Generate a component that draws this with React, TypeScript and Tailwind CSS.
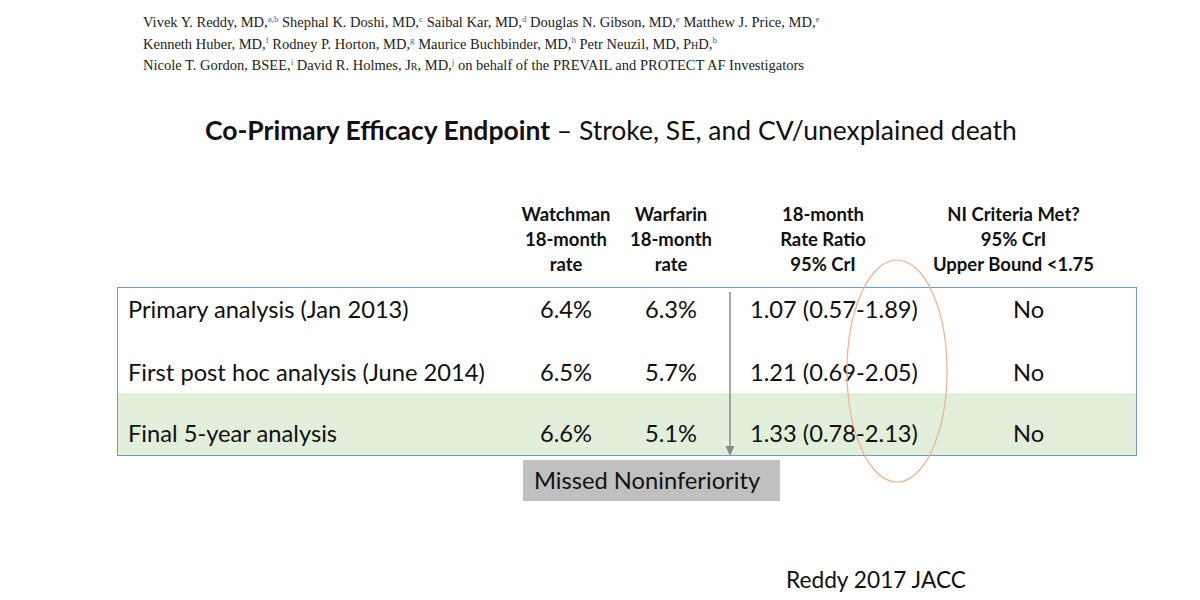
import React from 'react';

const sans = "font-['Lato','Liberation_Sans',sans-serif]";

const rows = [
  {
    label: 'Primary analysis (Jan 2013)',
    watchman: '6.4%',
    warfarin: '6.3%',
    ratio: '1.07 (0.57-1.89)',
    met: 'No',
    cls: 'h-[51px] pt-[6px] bg-white',
  },
  {
    label: 'First post hoc analysis (June 2014)',
    watchman: '6.5%',
    warfarin: '5.7%',
    ratio: '1.21 (0.69-2.05)',
    met: 'No',
    cls: 'h-[54px] pt-[18px] bg-white',
  },
  {
    label: 'Final 5-year analysis',
    watchman: '6.6%',
    warfarin: '5.1%',
    ratio: '1.33 (0.78-2.13)',
    met: 'No',
    cls: 'h-[62px] pt-[25px] bg-[#e2efda]',
  },
];

function Sup({ children }: { children: React.ReactNode }) {
  return <sup className="text-[9px] text-[#2a6ebb] top-[-0.6em]">{children}</sup>;
}

function Authors() {
  return (
    <div className="pl-[143px] pt-[12px] font-['Liberation_Serif',serif] text-[14.5px] leading-[21.5px] text-[#222]">
      <div>
        Vivek Y. Reddy, MD,<Sup>a,b</Sup> Shephal K. Doshi, MD,<Sup>c</Sup> Saibal Kar, MD,<Sup>d</Sup> Douglas N. Gibson, MD,
        <Sup>e</Sup> Matthew J. Price, MD,<Sup>e</Sup>
      </div>
      <div>
        Kenneth Huber, MD,<Sup>f</Sup> Rodney P. Horton, MD,<Sup>g</Sup> Maurice Buchbinder, MD,<Sup>h</Sup> Petr Neuzil, MD,{' '}
        <span className="[font-variant:small-caps]">PhD</span>,<Sup>b</Sup>
      </div>
      <div>
        Nicole T. Gordon, BSEE,<Sup>i</Sup> David R. Holmes, <span className="[font-variant:small-caps]">Jr</span>, MD,
        <Sup>j</Sup> on behalf of the PREVAIL and PROTECT AF Investigators
      </div>
    </div>
  );
}

const grid = 'grid grid-cols-[397px_102px_108px_196px_215px]';

export default function App() {
  return (
    <div className={`relative w-[1200px] h-[600px] bg-white overflow-hidden text-black ${sans}`}>
      <Authors />

      <div className="mt-[35px] pl-[205px] text-[26.5px] leading-[36px] text-[#111] whitespace-nowrap">
        <span className="font-bold">Co-Primary Efficacy Endpoint</span> – Stroke, SE, and CV/unexplained death
      </div>

      <div className={`${grid} ml-[118px] mt-[54px] text-[18.5px] leading-[25px] font-bold text-center text-[#111]`}>
        <div />
        <div>
          Watchman
          <br />
          18-month
          <br />
          rate
        </div>
        <div>
          Warfarin
          <br />
          18-month
          <br />
          rate
        </div>
        <div>
          18-month
          <br />
          Rate Ratio
          <br />
          95% CrI
        </div>
        <div className="pr-[30px]">
          NI Criteria Met?
          <br />
          95% CrI
          <br />
          Upper Bound &lt;1.75
        </div>
      </div>

      <div className="ml-[117px] mt-[10px] w-[1020px] border border-[#6f9ccc] text-[23.7px] leading-[30px] text-[#111]">
        {rows.map(r => (
          <div key={r.label} className={`${grid} ${r.cls} whitespace-nowrap`}>
            <div className="pl-[10px]">{r.label}</div>
            <div className="text-center">{r.watchman}</div>
            <div className="text-center">{r.warfarin}</div>
            <div className="pl-[25px]">{r.ratio}</div>
            <div className="text-center">{r.met}</div>
          </div>
        ))}
      </div>

      <div className="ml-[523px] mt-[4px] w-[257px] h-[41px] bg-[#c0c0c0] pl-[11px] text-[23.7px] leading-[41px] text-[#111] whitespace-nowrap">
        Missed Noninferiority
      </div>

      <div className="ml-[786px] mt-[64px] text-[22.7px] leading-[30px] text-[#111]">Reddy 2017 JACC</div>

      {/* arrow down the watchman / warfarin split */}
      <svg className="absolute left-[724px] top-[292px]" width="12" height="166" viewBox="0 0 12 166">
        <line x1="6" y1="0" x2="6" y2="156" stroke="#8a8a8a" strokeWidth="1.5" />
        <path d="M1.5 154 L10.5 154 L6 164 Z" fill="#8a8a8a" />
      </svg>

      {/* ellipse over the upper bounds */}
      <svg className="absolute left-[840px] top-[255px]" width="114" height="234" viewBox="0 0 114 234">
        <ellipse cx="57" cy="116" rx="50" ry="111" fill="none" stroke="#f2b08a" strokeWidth="1.2" />
      </svg>
    </div>
  );
}
